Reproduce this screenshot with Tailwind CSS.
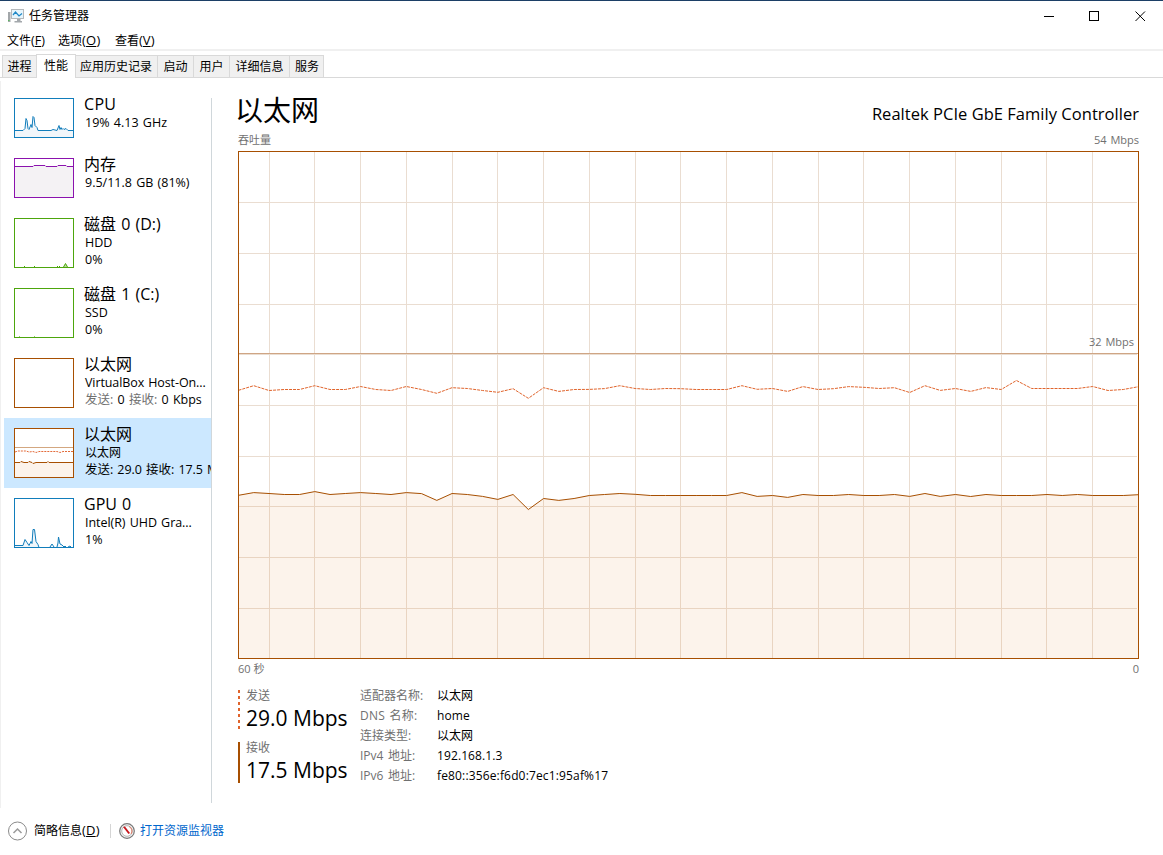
<!DOCTYPE html>
<html lang="zh-CN">
<head>
<meta charset="utf-8">
<title>任务管理器</title>
<script src="https://cdn.jsdelivr.net/npm/@tailwindcss/browser@4"></script>
</head>
<body class="w-[1163px] h-[855px] overflow-hidden bg-white text-black text-[12px] font-['Open_Sans','Noto_Sans_CJK_SC',sans-serif] whitespace-nowrap flex flex-col">
<div class="h-px shrink-0 bg-[#1c3f66]"></div>
<!-- title bar -->
<header class="h-[30px] shrink-0 flex items-center justify-between">
  <div class="flex items-center pl-2 gap-[5px]">
    <svg width="16" height="16" viewBox="0 0 16 16"><path d="M0 4h2.500v10h-2.500z" fill="#a3a7aa"/><path d="M0 12.500h1.500" stroke="#59b85c"/><rect x="3.500" y="1.500" width="12" height="9" fill="#e6f5fc" stroke="#b4b8bb"/><path d="M5 7l2.500-3 3.500 4 3-2.500" fill="none" stroke="#1e88c7" stroke-width="1.200"/><path d="M9 11h3.500v2h1.500v1.500h-7.500v-1.500h2.500z" fill="#a3a8ac"/></svg>
    <span class="leading-4">任务管理器</span>
  </div>
  <div class="flex items-center pr-[17px] gap-[35px]">
    <svg width="11" height="11" viewBox="0 0 11 11"><path d="M1 5.500h10" stroke="#000"/></svg>
    <svg width="11" height="11" viewBox="0 0 11 11"><rect x=".5" y=".5" width="9" height="9" fill="none" stroke="#000"/></svg>
    <svg width="11" height="11" viewBox="0 0 11 11"><path d="M.5 .5l9.500 9.500M10 .5l-9.500 9.500" stroke="#000"/></svg>
  </div>
</header>
<nav class="h-[18px] shrink-0 flex items-center pt-[2px] pl-[7px]">
  <span class="w-[51px]">文件<span class="text-[12.500px]">(<u>F</u>)</span></span><span class="w-[57px]">选项<span class="text-[13px] tracking-[0.2px]">(<u>O</u>)</span></span><span>查看<span class="text-[13px]">(<u>V</u>)</span></span>
</nav>
<div class="h-0.5 shrink-0 bg-[#f0f0f0]"></div>
<div class="h-[27px] shrink-0 flex items-end pl-[2px] border-b border-[#d9d9d9]">
  <div class="h-[22px] w-[34px] bg-[#f0f0f0] border-t border-l border-[#d9d9d9] flex items-center justify-center">进程</div>
  <div class="h-[24px] -mb-px w-[40px] bg-white border-t border-x border-[#d9d9d9] flex items-center justify-center pb-px">性能</div>
  <div class="h-[22px] w-[82px] bg-[#f0f0f0] border-t border-r border-[#d9d9d9] flex items-center justify-center pr-px">应用历史记录</div>
  <div class="h-[22px] w-[36px] bg-[#f0f0f0] border-t border-r border-[#d9d9d9] flex items-center justify-center">启动</div>
  <div class="h-[22px] w-[36px] bg-[#f0f0f0] border-t border-r border-[#d9d9d9] flex items-center justify-center">用户</div>
  <div class="h-[22px] w-[60px] bg-[#f0f0f0] border-t border-r border-[#d9d9d9] flex items-center justify-center">详细信息</div>
  <div class="h-[22px] w-[34px] bg-[#f0f0f0] border-t border-r border-[#d9d9d9] flex items-center justify-center pl-px">服务</div>
</div>
<main class="h-[727px] mt-[3px] pl-[3px] shrink-0 flex border-l border-[#f0f0f0]">
  <aside class="w-[208px] h-[722px] pt-[7px] shrink-0 flex border-r border-transparent">
   <div class="w-[207px] overflow-hidden text-[12.500px] leading-[17px] [word-spacing:1px]">
    <div class="h-[60px] pl-[10px] pt-[7px] flex gap-[10px]">
      <svg class="mt-[3px] shrink-0" width="60" height="40" viewBox="0 0 60 40"><path d="M1 32.500h8l2-2 1-10 1 2 1 8 1 1 2-5 1 3 1-11 1 1 1 8 2 2 1 3h13l2-1 4 1 2-5 1 4 1-2 1 2 1-1 1 1 2-1 2 2h5V39H1z" fill="#f1f6fa"/><path d="M1 32.500h8l2-2 1-10 1 2 1 8 1 1 2-5 1 3 1-11 1 1 1 8 2 2 1 3h13l2-1 4 1 2-5 1 4 1-2 1 2 1-1 1 1 2-1 2 2h5" fill="none" stroke="#117dbb"/><rect x=".5" y=".5" width="59" height="39" fill="none" stroke="#117dbb"/></svg>
      <div><div class="text-[16px] leading-[18px] mb-px tracking-[0.3px]">CPU</div><div class="pl-px">19% 4.13 GHz</div></div>
    </div>
    <div class="h-[60px] pl-[10px] pt-[7px] flex gap-[10px]">
      <svg class="mt-[3px] shrink-0" width="60" height="40" viewBox="0 0 60 40"><path d="M0 8.500h19l1-1h11l1 1h11l1-1h8l1 1h7V40H0z" fill="#f4f2f4" stroke="#8b12ae"/><rect x=".5" y=".5" width="59" height="39" fill="none" stroke="#8b12ae"/></svg>
      <div><div class="text-[16px] leading-[18px] mb-px">内存</div><div class="pl-px">9.5/11.8 GB (81%)</div></div>
    </div>
    <div class="h-[70px] pl-[10px] pt-[7px] flex gap-[10px]">
      <svg class="mt-[3px] shrink-0" width="60" height="50" viewBox="0 0 60 50"><path d="M10 48.500h1M20 48.500h1M43 48.500h1M45 48.500h1M49.500 49l2-3.500 2 3.500" fill="#b9dca0" stroke="#4da60c"/><rect x=".5" y=".5" width="59" height="49" fill="none" stroke="#4da60c"/></svg>
      <div><div class="text-[16px] leading-[18px] mb-px">磁盘 0 (D:)</div><div class="pl-px">HDD</div><div class="pl-px">0%</div></div>
    </div>
    <div class="h-[70px] pl-[10px] pt-[7px] flex gap-[10px]">
      <svg class="mt-[3px] shrink-0" width="60" height="50" viewBox="0 0 60 50"><path d="M5 48.500h1M20 48.500h1" stroke="#94ca6d"/><rect x=".5" y=".5" width="59" height="49" fill="none" stroke="#4da60c"/></svg>
      <div><div class="text-[16px] leading-[18px] mb-px">磁盘 1 (C:)</div><div class="pl-px">SSD</div><div class="pl-px">0%</div></div>
    </div>
    <div class="h-[70px] pl-[10px] pt-[7px] flex gap-[10px]">
      <svg class="mt-[3px] shrink-0" width="60" height="50" viewBox="0 0 60 50"><rect x=".5" y=".5" width="59" height="49" fill="none" stroke="#a74f01"/></svg>
      <div><div class="text-[16px] leading-[18px] mb-px">以太网</div><div class="pl-px tracking-[-0.1px]">VirtualBox Host-On...</div><div class="pl-px"><span class="text-[#707070]">发送:</span> 0 <span class="text-[#707070]">接收:</span> 0 Kbps</div></div>
    </div>
    <div class="h-[70px] pl-[10px] pt-[7px] flex gap-[10px] bg-[#cce8ff]">
      <svg class="mt-[3px] shrink-0" width="60" height="50" viewBox="0 0 60 50"><rect width="60" height="50" fill="#fff"/><path d="M1 34.500h5l1-1 3 1h4l1-1 3 1 1 1 3-1h11l1-1 1 1h25V49H1z" fill="#fcf3eb"/><path d="M1 34.500h5l1-1 3 1h4l1-1 3 1 1 1 3-1h11l1-1 1 1h25" fill="none" stroke="#a74f01"/><path d="M1 19.500h58" stroke="#d3a780"/><path d="M1 24l3-1h8l3 1 4-.5 3 1 3-1h18l3 1 3-1h10" fill="none" stroke="#e36b3a" stroke-dasharray="2 1"/><rect x=".5" y=".5" width="59" height="49" fill="none" stroke="#a74f01"/></svg>
      <div><div class="text-[16px] leading-[18px] mb-px">以太网</div><div class="pl-px text-[12px]">以太网</div><div class="pl-px tracking-[-0.05px]">发送: 29.0 接收: 17.5 Mbps</div></div>
    </div>
    <div class="h-[70px] pl-[10px] pt-[7px] flex gap-[10px]">
      <svg class="mt-[3px] shrink-0" width="60" height="50" viewBox="0 0 60 50"><path d="M1 47.500h8l2-6 2 3 2 3 2-4 1 2 1-14h2l1 12 2 3 1 3h10l2-3 2 3h3l1-4 1-6 1 7 2 1 2 2 1-1 1 1h1l3-1 1 1V49H1z" fill="#f1f6fa"/><path d="M1 47.500h8l2-6 2 3 2 3 2-4 1 2 1-14h1.500l1.500 12 2 3 1 3M36 49l2-3 2 3M43 49l1-4 .5-6 1.500 7 2 1 2 2 1-1 1 1M54 49l2-1 1 1" fill="none" stroke="#117dbb"/><rect x=".5" y=".5" width="59" height="49" fill="none" stroke="#117dbb"/></svg>
      <div><div class="text-[16px] leading-[18px] mb-px">GPU 0</div><div class="pl-px tracking-[-0.05px]">Intel(R) UHD Gra...</div><div class="pl-px">1%</div></div>
    </div>
   </div>
  </aside>
  <div class="w-px h-[705px] mt-[17px] -ml-px bg-[#d0d7db] shrink-0"></div>
  <section class="ml-[26px] w-[901px] shrink-0">
    <div class="h-[50px] flex justify-between items-end">
      <h1 class="text-[28px] leading-[38px] pb-[2px] -ml-[3px]">以太网</h1>
      <div class="text-[16.500px] leading-[22px] pb-[6px] tracking-[0.030px]">Realtek PCIe GbE Family Controller</div>
    </div>
    <div class="h-5 flex justify-between text-[11px] leading-[18px] text-[#707070]"><span>吞吐量</span><span class="[word-spacing:1px]">54 Mbps</span></div>
    <div class="relative w-[901px] h-[508px]">
      <svg width="901" height="508" viewBox="238 151 901 508" class="block">
        <path fill="none" stroke="#eaddd1" d="M269.500 152v506M314.500 152v506M360.500 152v506M406.500 152v506M452.500 152v506M497.500 152v506M543.500 152v506M589.500 152v506M635.500 152v506M680.500 152v506M726.500 152v506M772.500 152v506M818.500 152v506M863.500 152v506M909.500 152v506M955.500 152v506M1001.500 152v506M1046.500 152v506M1092.500 152v506M239 202.500h898M239 253.500h898M239 304.500h898M239 354.500h898M239 405.500h898M239 456.500h898M239 506.500h898M239 557.500h898M239 608.500h898"/>
        <path id="area" fill="#e38b36" fill-opacity=".1"/>
        <path id="recv" fill="none" stroke="#a74f01"/>
        <path id="sent" fill="none" stroke="#e0642c" stroke-dasharray="3 1"/>
        <path stroke="#cfa584" d="M239 353.500h899"/>
        <rect x="238.500" y="151.500" width="900" height="507" fill="none" stroke="#a74f01"/>
      </svg>
      <span class="absolute right-[5px] top-[182px] text-[11px] leading-[18px] text-[#707070] [word-spacing:1px]">32 Mbps</span>
    </div>
    <div class="h-5 flex justify-between text-[11px] leading-5 text-[#707070]"><span>60 秒</span><span>0</span></div>
    <div class="flex pt-[7px]">
      <div class="w-[122px]">
        <div class="flex h-[52px]">
          <svg width="2" height="40" class="mt-1 mr-[6px]"><path d="M1 0v40" stroke="#e0642c" stroke-width="2" stroke-dasharray="3 3"/></svg>
          <div><div class="text-[#707070] leading-[18px] mt-px">发送</div><div class="text-[21px] leading-[26px]">29.0 Mbps</div></div>
        </div>
        <div class="flex h-[52px]">
          <div class="w-[2px] h-[41px] mt-1 mr-[6px] bg-[#a74f01]"></div>
          <div><div class="text-[#707070] leading-[18px] mt-px">接收</div><div class="text-[21px] leading-[26px]">17.5 Mbps</div></div>
        </div>
      </div>
      <div class="grid grid-cols-[77px_auto] leading-5 content-start">
        <span class="text-[#707070]">适配器名称:</span><span>以太网</span>
        <span class="text-[#707070] tracking-[0.25px] [word-spacing:1px]">DNS 名称:</span><span class="tracking-[0.1px]">home</span>
        <span class="text-[#707070]">连接类型:</span><span>以太网</span>
        <span class="text-[#707070] [word-spacing:1.500px]">IPv4 地址:</span><span class="tracking-[0.1px]">192.168.1.3</span>
        <span class="text-[#707070] [word-spacing:1.500px]">IPv6 地址:</span><span class="tracking-[0.150px]">fe80::356e:f6d0:7ec1:95af%17</span>
      </div>
    </div>
  </section>
</main>
<footer class="h-[46px] shrink-0 flex items-center pl-2">
  <svg width="20" height="20" viewBox="0 0 20 20"><circle cx="9.500" cy="10" r="9" fill="none" stroke="#8a8a8a"/><path d="M5.500 12l4-4 4 4" fill="none" stroke="#9a9a9a" stroke-width="1.500"/></svg>
  <span class="ml-[6px] w-[68px]">简略信息<span class="text-[13px] tracking-[0.200px]">(<u>D</u>)</span></span>
  <div class="w-px h-[14px] ml-2 bg-[#d5d5d5]"></div>
  <svg class="ml-2" width="17" height="17" viewBox="0 0 17 17"><circle cx="8" cy="8" r="7.300" fill="#f4f4f4" stroke="#777" stroke-width="1.200"/><circle cx="8" cy="8" r="5.300" fill="#fff" stroke="#b5b5b5"/><path d="M10 3.500a5 5 0 0 1 2 7.500" fill="none" stroke="#e0765e"/><path d="M4 4l2-.5 5 6.500-1.500 1z" fill="#c8161d"/></svg>
  <span class="ml-1 text-[#0066cc]">打开资源监视器</span>
</footer>
<script>
const sent=[390.3,385.7,390.5,389.5,389.5,385.7,389.5,389.5,386.5,389.5,390.5,386.5,389.5,393.3,387.7,388.5,390.5,392.3,388.7,398.3,387.7,391.4,389.5,389.4,388.6,385.7,388.5,389.5,388.5,388.7,389.5,389.5,389.5,385.7,389.3,388.5,391.4,386.6,389.5,388.7,386.6,387.3,388.5,387.7,392.5,385.7,390.4,388.5,391.4,387.6,389.5,380.5,388.5,388.5,388.5,388.5,386.5,390.5,389.5,386.7];
const recv=[495.3,492.6,493.5,494.5,494.5,491.6,494.5,493.5,492.6,493.5,494.5,492.6,493.6,500.4,493.5,494.5,496.4,499.4,494.5,509.5,498.5,500.4,498.5,495.5,494.5,493.5,494.3,495.5,495.5,495.5,495.5,495.5,495.5,492.6,496.4,495.5,497.4,494.5,495.5,495.5,494.5,495.5,495.5,494.5,496.4,493.5,496.4,494.5,496.5,494.5,495.5,495.5,495.5,494.5,495.5,494.5,495.5,495.5,495.5,494.7];
const line=a=>'M'+a.map((y,i)=>(238.5+i*900/59).toFixed(2)+' '+y).join('L');
document.getElementById('sent').setAttribute('d',line(sent));
document.getElementById('recv').setAttribute('d',line(recv));
document.getElementById('area').setAttribute('d',line(recv)+'V658H238.5Z');
</script>
</body>
</html>
